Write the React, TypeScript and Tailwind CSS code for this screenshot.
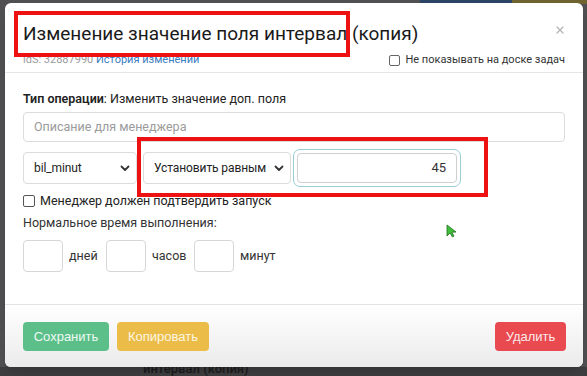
import { X } from 'lucide-react'

const body = { fontFamily: 'Roboto, "Noto Sans", sans-serif' }
const btn = { fontFamily: '"Liberation Sans", Arial, sans-serif' }

function Chevron() {
  return (
    <svg width="10" height="7" viewBox="0 0 10 7" className="shrink-0">
      <path d="M1.5 1.5 L5 5 L8.5 1.5" fill="none" stroke="#333" strokeWidth="1.8" strokeLinecap="round" strokeLinejoin="round" />
    </svg>
  )
}

function Select({ label, className }: { label: string; className: string }) {
  return (
    <div className={`h-[32px] flex items-center justify-between gap-[6px] pl-[10px] pr-[6px] border border-[#dcdcdc] rounded-[4px] text-[12px] tracking-[-0.1px] text-[#222] whitespace-nowrap ${className}`}>
      <span>{label}</span>
      <Chevron />
    </div>
  )
}

function Box() {
  return <div className="w-[40px] h-[32px] border border-[#d6d6d6] rounded-[4px] bg-white" />
}

export default function App() {
  return (
    <div className="relative w-[587px] h-[376px] overflow-hidden bg-[#505052]" style={body}>
      {/* bits of the page behind the backdrop */}
      <div className="absolute top-0 left-[420px] w-[92px] h-[4px] bg-[#2c4466]" />
      <div className="absolute top-0 left-[512px] w-[75px] h-[4px] bg-[#6f6330]" />
      <div className="absolute left-0 top-[367px] w-[587px] h-[9px] bg-[#3e3e40]" />
      <div className="absolute left-[143px] top-[362px] text-[13px] leading-[14px] font-medium text-[#1c1c1c]">интервал (копия)</div>

      <div className="relative ml-[5px] mt-[3px] w-[578px] h-[364px] rounded-[6px] bg-white flex flex-col overflow-hidden shadow-lg">
        {/* header */}
        <div className="relative h-[70px] pt-[17px] px-[18px] border-b border-[#e6e6e6]">
          <div className="text-[19px] leading-[27px] text-[#1a1a1a]">Изменение значение поля интервал (копия)</div>
          <div className="mt-[5px] flex items-center justify-between text-[11px] leading-[16px]">
            <div className="text-[#9a9a9a]">
              idS: 32887990 <span className="text-[#3a7cc0]">История изменений</span>
            </div>
            <div className="flex items-center gap-[5px] text-[#333]">
              <span className="w-[11px] h-[11px] border border-[#666] rounded-[2px] bg-white" />
              Не показывать на доске задач
            </div>
          </div>
          <X className="absolute right-[17px] top-[21px] text-[#b5b5b5]" size={12} strokeWidth={2.5} />
        </div>

        {/* body */}
        <div className="flex-1 px-[18px] pt-[17px] text-[12.5px] leading-[18px] text-[#222]">
          <div>
            <span className="font-semibold">Тип операции</span>: Изменить значение доп. поля
          </div>
          <div className="mt-[4px] h-[30px] flex items-center px-[10px] border border-[#dcdcdc] rounded-[4px] text-[#9b9b9b]">
            Описание для менеджера
          </div>
          <div className="mt-[7px] flex items-center gap-[6px]">
            <Select label="bil_minut" className="w-[114px]" />
            <Select label="Установить равным" className="w-[148px]" />
            <div className="w-[168px] h-[38px] -ml-[4px] p-[3px] rounded-[7px] border-[1.5px] border-[#9ccdd6]">
              <div className="h-full flex items-center justify-end pr-[10px] border border-[#cfcfcf] rounded-[4px] text-[13px] text-[#333]">45</div>
            </div>
          </div>
          <div className="mt-[5px] flex items-center gap-[5px]">
            <span className="w-[12px] h-[12px] border border-[#555] rounded-[2px] bg-white" />
            Менеджер должен подтвердить запуск
          </div>
          <div className="mt-[4px] text-[#333]">Нормальное время выполнения:</div>
          <div className="mt-[8px] flex items-center text-[#333]">
            <Box />
            <span className="ml-[6px] w-[37px]">дней</span>
            <Box />
            <span className="ml-[6px] w-[42px]">часов</span>
            <Box />
            <span className="ml-[6px]">минут</span>
          </div>
        </div>

        {/* footer */}
        <div className="h-[63px] border-t border-[#e3e3e3] bg-gradient-to-b from-white to-[#ebebeb] flex items-start justify-between pt-[17px] pl-[18px] pr-[17px]" style={btn}>
          <div className="flex gap-[8px]">
            <div className="w-[86px] h-[29px] rounded-[4px] bg-[#5cbf8a] text-[#eefaf3] text-[13px] flex items-center justify-center">Сохранить</div>
            <div className="w-[92px] h-[29px] rounded-[4px] bg-[#ebbd48] text-[#fdf6e2] text-[13px] flex items-center justify-center">Копировать</div>
          </div>
          <div className="w-[71px] h-[29px] rounded-[4px] bg-[#e84a50] text-[#fde9ea] text-[13px] flex items-center justify-center">Удалить</div>
        </div>
      </div>

      {/* annotation boxes */}
      <div className="absolute left-[14px] top-[11px] w-[336px] h-[46px] border-[4px] border-[#ee1111]" />
      <div className="absolute left-[137px] top-[137px] w-[351px] h-[60px] border-[4px] border-[#ee1111]" />

      {/* mouse cursor */}
      <svg className="absolute left-[446px] top-[224px]" width="12" height="14" viewBox="0 0 12 14">
        <path d="M1 1 L1 12 L4 9 L6.5 13 L8 12 L5.7 8.2 L10 8 Z" fill="#3fbf3a" stroke="#1f6e1c" strokeWidth="0.8" />
      </svg>
    </div>
  )
}
